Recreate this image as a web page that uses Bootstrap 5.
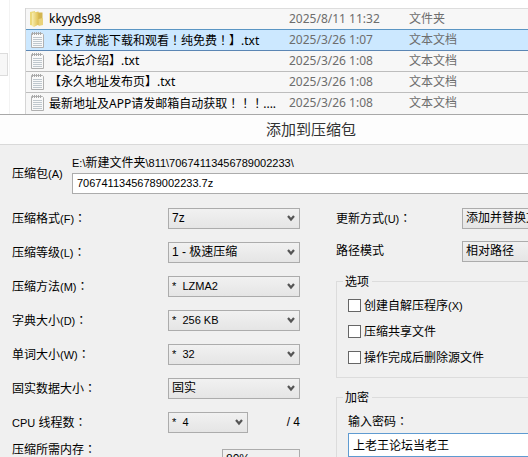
<!DOCTYPE html>
<html lang="zh-CN">
<head>
<meta charset="utf-8">
<meta name="viewport" content="width=device-width, initial-scale=1">
<title>添加到压缩包</title>
<link href="https://cdn.jsdelivr.net/npm/bootstrap@5.3.0/dist/css/bootstrap.min.css" rel="stylesheet">
<style>
body{font:12px/16px "Liberation Sans","Noto Sans CJK SC",sans-serif;color:#000;background:#fff;height:100vh;text-spacing-trim:space-all}
.mid{font-family:"Noto Sans CJK TC",sans-serif}
.explorer{font-family:"Noto Sans","Noto Sans CJK SC",sans-serif}
.side{width:10px;border-right:1px solid #f3f3f3;padding-top:53px}
.side-item{height:23px;margin-right:1px;background:#f7f7f7;border:1px solid #dcdcdc;border-left:0}
.files{margin-left:15px;margin-top:8px;border-left:1px solid #d5d5d5}
.file-table{width:100%;table-layout:fixed;border-collapse:collapse;color:#6d6d6d;white-space:nowrap}
.file-table tr{height:21px;background:#f7f7f7;border-top:1px solid #bdbdbd}
.file-table tr:first-child{border-top-color:#ddd}
.file-table tr.picked{background:#cce8ff;border-top:1px solid #5b96c4;border-bottom:1px solid #5b86b4}
.file-table td{padding:0;overflow:hidden;line-height:18px}
.file-table .c-name{width:263px;color:#000;padding-left:3px}
.file-table .c-date{width:120px}
.file-table svg{width:16px;height:18px;margin-right:4px;vertical-align:top}
.dlg{width:calc(100% + 94px);background:#f0f0f0;border-top:1px solid #a8a8a8;min-height:calc(100vh - 113px)}
.dlg-title{font-size:15px;line-height:29px;font-weight:400;background:#fdfdfd;border-bottom:1px solid #d9d9d9;color:#333}
.dlg-body{padding:10px 12px}
.arc-row{margin-bottom:14px}
.arc-path{margin-bottom:2px}
.name-label{width:60px}
.box{height:21px;border:1px solid #acacac;border-radius:0;padding:0 4px;font-size:12px;line-height:16px;color:#000;min-width:0}
.lat{font-size:11px}
input.box{background:#fff}
select.box{appearance:none;padding:0 20px 0 3px;background:url("data:image/svg+xml,%3Csvg xmlns='http://www.w3.org/2000/svg' width='8' height='7'%3E%3Cpath d='M1 1l3 3.5L7 1' fill='none' stroke='%23555' stroke-width='2.2'/%3E%3C/svg%3E") no-repeat right 4px center,linear-gradient(#f1f1f1,#e5e5e5)}
select.plain{background:#f0f0f0}
input.secret{height:24px;border-color:#5f9bd1}
.settings{width:288px}
.line{height:21px;margin-bottom:13px}
.line.tight{margin-bottom:8px}
.line label{width:156px}
.line .grow{flex:1}
.line .short{width:80px}
.line .mem{width:78px}
.mode{height:21px;margin-bottom:12px}
.mode label{width:126px}
fieldset.group{border:1px solid #dcdcdc;padding:0 11px 11px;margin-bottom:12px}
.group legend{float:none;width:auto;margin:0 0 0 -5px;padding:0 3px 0 2px;font-size:12px;line-height:16px}
.tick{height:16px;gap:3px}
.tick input{appearance:none;width:13px;height:13px;border:1px solid #666;background:#fff;margin:0}
.tick input:checked{background:#2a78c2}
.ticks{gap:10px;padding-top:8px}
.pwd-label{padding:7px 0 3px}
</style>
<script src="https://cdn.jsdelivr.net/npm/bootstrap@5.3.0/dist/js/bootstrap.bundle.min.js"></script>
</head>
<body class="overflow-hidden d-flex flex-column">
<svg width="0" height="0" class="position-absolute" aria-hidden="true">
  <defs>
    <linearGradient id="gold"><stop offset="0" stop-color="#f8eeb0"/><stop offset="1" stop-color="#dfbf52"/></linearGradient>
  </defs>
  <symbol id="doc" viewBox="0 0 16 18">
    <path d="M2.500 2.500h11l1 1v13h-12z" fill="#f9f9f9" stroke="#b0b0b0"/>
    <path d="M3.500 1v3M5.500 1v3M7.500 1v3M9.500 1v3M11.500 1v3" stroke="#a9a9a9"/>
    <path d="M4 6.500h9M4 8.500h9M4 10.500h9M4 12.500h9M4 14.500h9" stroke="#bfc7cd"/>
  </symbol>
</svg>
<main class="d-flex flex-column">
  <section class="explorer d-flex">
    <div class="side flex-shrink-0"><div class="side-item"></div></div>
    <div class="files flex-grow-1">
      <table class="file-table">
        <tr>
          <td class="c-name"><svg viewBox="0 0 16 18" aria-hidden="true"><path d="M1 2l5-1v15l-5-1z" fill="#ecd97c"/><path d="M6 2.500h7.500V15H6z" fill="#d3b551"/><path d="M3 3l6.500-1.500v13L5 17l-2-1z" fill="url(#gold)"/><path d="M9.500 9l4.500-1v7l-4.500 1z" fill="#e9d27a"/></svg>kkyyds98</td>
          <td class="c-date">2025/8/11 11:32</td><td>文件夹</td>
        </tr>
        <tr class="picked">
          <td class="c-name"><svg aria-hidden="true"><use href="#doc"/></svg>【来了就能下载和观看<span class="mid" lang="zh-TW">！</span>纯免费<span class="mid" lang="zh-TW">！</span>】.txt</td>
          <td>2025/3/26 1:07</td><td>文本文档</td>
        </tr>
        <tr>
          <td class="c-name"><svg aria-hidden="true"><use href="#doc"/></svg>【论坛介绍】.txt</td>
          <td>2025/3/26 1:08</td><td>文本文档</td>
        </tr>
        <tr>
          <td class="c-name"><svg aria-hidden="true"><use href="#doc"/></svg>【永久地址发布页】.txt</td>
          <td>2025/3/26 1:08</td><td>文本文档</td>
        </tr>
        <tr>
          <td class="c-name"><svg aria-hidden="true"><use href="#doc"/></svg>最新地址及APP请发邮箱自动获取<span class="mid" lang="zh-TW">！！！</span>....</td>
          <td>2025/3/26 1:08</td><td>文本文档</td>
        </tr>
      </table>
    </div>
  </section>

  <section class="dlg">
    <h1 class="dlg-title text-center m-0">添加到压缩包</h1>
    <form class="dlg-body">
      <div class="arc-row d-flex align-items-center">
        <label for="arc" class="name-label">压缩包<span class="lat">(A)</span></label>
        <div class="flex-grow-1">
          <div class="arc-path"><span class="lat">E:\</span>新建文件夹<span class="lat">\811\70674113456789002233\</span></div>
          <input id="arc" class="box lat w-100 d-block" type="text" value="70674113456789002233.7z">
        </div>
      </div>
      <div class="d-flex">
        <div class="settings flex-shrink-0">
          <div class="line d-flex align-items-center"><label for="fmt">压缩格式<span class="lat">(F)</span><span class="mid" lang="zh-TW">：</span></label><select id="fmt" class="box grow"><option>7z</option></select></div>
          <div class="line d-flex align-items-center"><label for="lvl">压缩等级<span class="lat">(L)</span><span class="mid" lang="zh-TW">：</span></label><select id="lvl" class="box grow"><option>1 - 极速压缩</option></select></div>
          <div class="line d-flex align-items-center"><label for="mth">压缩方法<span class="lat">(M)</span><span class="mid" lang="zh-TW">：</span></label><select id="mth" class="box lat grow"><option>*&nbsp; LZMA2</option></select></div>
          <div class="line d-flex align-items-center"><label for="dic">字典大小<span class="lat">(D)</span><span class="mid" lang="zh-TW">：</span></label><select id="dic" class="box lat grow"><option>*&nbsp; 256 KB</option></select></div>
          <div class="line d-flex align-items-center"><label for="wrd">单词大小<span class="lat">(W)</span><span class="mid" lang="zh-TW">：</span></label><select id="wrd" class="box lat grow"><option>*&nbsp; 32</option></select></div>
          <div class="line d-flex align-items-center"><label for="sol">固实数据大小<span class="mid" lang="zh-TW">：</span></label><select id="sol" class="box grow"><option>固实</option></select></div>
          <div class="line tight d-flex align-items-center"><label for="cpu"><span class="lat">CPU</span> 线程数<span class="mid" lang="zh-TW">：</span></label><select id="cpu" class="box lat short"><option>*&nbsp; 4</option></select><span class="ms-auto">/ 4</span></div>
          <div class="d-flex justify-content-between align-items-start"><label for="mem">压缩所需内存<span class="mid" lang="zh-TW">：</span></label><div class="line mt-2"><select id="mem" class="box plain mem"><option>80%</option></select></div></div>
        </div>
        <div class="flex-grow-1 ms-4 ps-2">
          <div class="mode d-flex align-items-center ms-1"><label for="upd">更新方式<span class="lat">(U)</span><span class="mid" lang="zh-TW">：</span></label><select id="upd" class="box flex-grow-1"><option>添加并替换文件</option></select></div>
          <div class="mode d-flex align-items-center ms-1"><label for="pth">路径模式</label><select id="pth" class="box flex-grow-1"><option>相对路径</option></select></div>
          <fieldset class="group ms-1">
            <legend>选项</legend>
            <div class="ticks d-flex flex-column">
              <div class="tick d-flex align-items-center"><input type="checkbox" id="sfx"><label for="sfx">创建自解压程序<span class="lat">(X)</span></label></div>
              <div class="tick d-flex align-items-center"><input type="checkbox" id="shr"><label for="shr">压缩共享文件</label></div>
              <div class="tick d-flex align-items-center"><input type="checkbox" id="del"><label for="del">操作完成后删除源文件</label></div>
            </div>
          </fieldset>
          <fieldset class="group ms-1">
            <legend>加密</legend>
            <label for="pwd" class="pwd-label d-block">输入密码<span class="mid" lang="zh-TW">：</span></label>
            <input id="pwd" type="text" class="box secret w-100 d-block" value="上老王论坛当老王">
          </fieldset>
        </div>
      </div>
    </form>
  </section>
</main>
</body>
</html>
